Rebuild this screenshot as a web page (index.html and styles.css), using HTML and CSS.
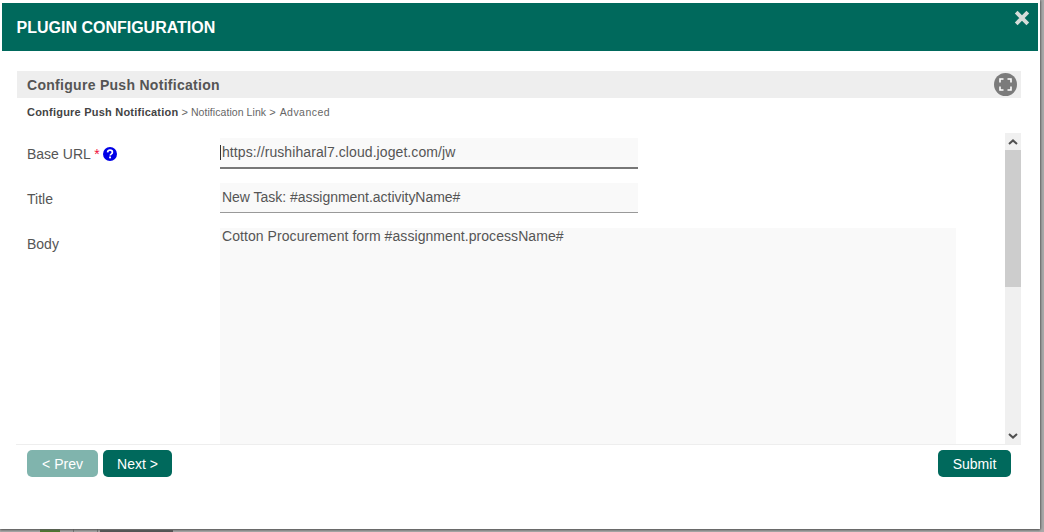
FILE: index.html
```html
<!DOCTYPE html>
<html lang="en">
<head>
<meta charset="utf-8">
<title>Plugin Configuration</title>
<link rel="stylesheet" href="styles.css">
</head>
<body>
<div class="dialog">
  <header class="dialog-head">
    <h1 class="dialog-title">PLUGIN CONFIGURATION</h1>
    <span class="close">
      <svg viewBox="0 0 16 16" width="16" height="16"><path d="M2.2 2.2l11.6 11.6M13.8 2.2L2.2 13.8" stroke="#d6dcd9" stroke-width="3.8" fill="none"/></svg>
    </span>
  </header>
  <div class="dialog-body">
    <div class="page-title">
      <span>Configure Push Notification</span>
      <span class="fullscreen">
        <svg viewBox="0 0 13 13" width="13" height="13"><path d="M1 4.5V1h3.5M8.5 1H12v3.5M12 8.5V12H8.5M4.5 12H1V8.5" stroke="#fff" stroke-width="1.6" fill="none"/></svg>
      </span>
    </div>
    <nav class="crumbs"><b>Configure Push Notification</b> <span class="sep">&gt;</span> <span class="step">Notification Link</span> <span class="sep">&gt;</span> <span class="step step-last">Advanced</span></nav>
    <div class="scroller">
      <div class="form">
        <div class="row row-url">
          <label class="lab">Base URL <span class="req">*</span>
            <svg class="help" viewBox="0 0 14 14" width="14" height="14"><circle cx="7" cy="7" r="7" fill="#0000e6"/><path d="M4.6 5.4C4.7 4 5.7 3.2 7 3.2c1.4 0 2.4.8 2.4 2 0 1-.6 1.5-1.2 1.9-.6.4-.9.7-.9 1.3" stroke="#fff" stroke-width="1.7" fill="none"/><rect x="6.1" y="9.5" width="1.9" height="1.8" fill="#fff"/></svg>
          </label>
          <div class="field focus"><span class="caret"></span>https://rushiharal7.cloud.joget.com/jw</div>
        </div>
        <div class="row row-title">
          <label class="lab">Title</label>
          <div class="field tight">New Task: #assignment.activityName#</div>
        </div>
        <div class="row">
          <label class="lab">Body</label>
          <div class="area">Cotton Procurement form #assignment.processName#</div>
        </div>
      </div>
      <div class="scrollbar">
        <div class="arrow"><svg viewBox="0 0 10 6" width="10" height="6"><path d="M1 5l4-3.6L9 5" stroke="#505050" stroke-width="2" fill="none"/></svg></div>
        <div class="track"><div class="thumb"></div></div>
        <div class="arrow"><svg viewBox="0 0 10 6" width="10" height="6"><path d="M1 1l4 3.6L9 1" stroke="#505050" stroke-width="2" fill="none"/></svg></div>
      </div>
    </div>
    <footer class="actions">
      <button class="btn btn-off">&lt; Prev</button>
      <button class="btn btn-next">Next &gt;</button>
      <button class="btn btn-submit">Submit</button>
    </footer>
  </div>
</div>
<div class="behind">
  <span class="blob"></span>
  <span class="tick"></span>
  <span class="tick"></span>
  <span class="bar"></span>
</div>
</body>
</html>
```
FILE: styles.css
```css
html, body { margin: 0; padding: 0; height: 100%; background: #a9a9a9; overflow: hidden; }
body { font-family: "Liberation Sans", Arial, sans-serif; color: #555; font-size: 14px; }
.dialog {
  width: 1040px; height: 529px; background: #fff; display: flex; flex-direction: column;
  padding: 3px 2px 0 2px; box-sizing: border-box; box-shadow: 0 1px 2px #555, 1px 0 2px #777;
  position: relative; z-index: 1;
}
.dialog-head {
  height: 48px; background: #00695c; display: flex; align-items: center;
  justify-content: space-between; padding: 0 0 0 14.5px; flex: none;
}
.dialog-title { margin: 2px 0 0; font-size: 16px; font-weight: bold; color: #fff; }
.close { align-self: flex-start; margin: 7px 8px 0 0; height: 16px; }
.dialog-body { padding: 20px 17px 0 15px; display: flex; flex-direction: column; flex: 1; min-height: 0; }
.page-title {
  height: 27px; background: #eee; display: flex; align-items: center; justify-content: space-between;
  padding: 0 0 0 10px; font-size: 14px; font-weight: bold; letter-spacing: .29px; color: #555; flex: none;
}
.fullscreen {
  width: 23px; height: 23px; border-radius: 50%; background: #7b7b7b; display: flex;
  align-items: center; justify-content: center; margin-right: 4px;
}
.fullscreen svg { display: block; }
.crumbs { margin: 7px 0 0 10px; font-size: 11px; height: 14px; line-height: 14px; color: #666; flex: none; white-space: nowrap; }
.crumbs b { color: #444; letter-spacing: .22px; }
.step { font-size: 10.5px; letter-spacing: .06px; }
.step-last { letter-spacing: .45px; margin-left: 1px; }
.scroller {
  margin-top: 14px; height: 311px; display: flex; flex: none; overflow: hidden;
  border-bottom: 1px solid #eee; margin-left: -1px;
}
.form { flex: 1; padding: 0 0 0 11px; min-width: 0; }
.row { display: flex; }
.row-url { height: 45px; margin-top: 5px; }
.row-title { height: 45px; }
.lab { width: 193px; flex: none; padding-top: 8px; color: #555; line-height: 16px; font-size: 14px; }
.req { color: #f0103c; }
.help { vertical-align: -2px; margin-left: -1px; }
.field {
  width: 418px; height: 30px; box-sizing: border-box; background: #f9f9f9; border-bottom: 1px solid #999;
  padding: 0 2px; line-height: 29px; font-size: 14px; color: #555; position: relative; white-space: nowrap;
}
.field.focus { height: 31px; border-bottom: 2px solid #777; letter-spacing: .08px; }
.field.tight { letter-spacing: -.03px; }
.caret { position: absolute; left: 0; top: 7px; width: 1px; height: 15px; background: #333; }
.area {
  width: 736px; height: 260px; box-sizing: border-box; background: #f9f9f9;
  padding: 0 2px; line-height: 16px; font-size: 14px; color: #555; letter-spacing: .065px;
}
.scrollbar { width: 16px; flex: none; background: #f0f0f0; display: flex; flex-direction: column; }
.arrow { height: 17px; display: flex; align-items: center; justify-content: center; flex: none; }
.track { flex: 1; }
.thumb { height: 137px; background: #cdcdcd; }
.actions { display: flex; gap: 5px; padding: 5px 10px 0 10px; }
.btn {
  height: 27px; border: 0; border-radius: 5px; background: #00695c; color: #fff; font-family: inherit;
  font-size: 14px; padding: 0;
}
.btn-off { width: 71px; background: #80b4ad; }
.btn-next { width: 69px; }
.btn-submit { width: 73px; margin-left: auto; margin-right: 0; }
.behind { position: absolute; left: 0; top: 529px; height: 3px; width: 1040px; overflow: hidden; }
.blob { position: absolute; left: 40px; top: 0; width: 20px; height: 3px; background: #4f7a2e; }
.tick { position: absolute; left: 73px; top: 0; width: 1px; height: 3px; background: #777; }
.tick + .tick { left: 97px; }
.bar { position: absolute; left: 100px; top: 1px; width: 73px; height: 2px; background: #555; }
```
